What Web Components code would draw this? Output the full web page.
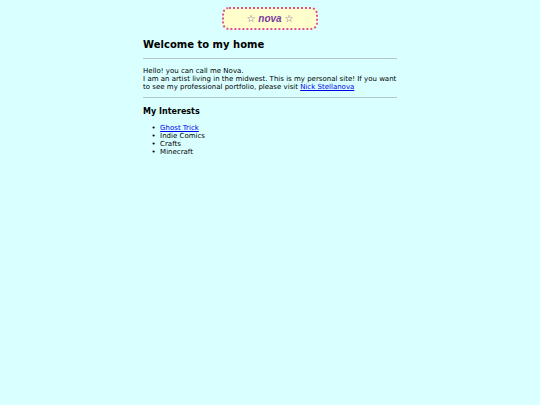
<!DOCTYPE html>
<html lang="en">
<head>
<meta charset="utf-8">
<title>nova</title>
<style>
body { margin: 0; min-height: 100vh; background: #d9ffff; color: #000; font: 7px/8px "DejaVu Sans", Verdana, sans-serif; }
</style>
</head>
<body>
<home-page>
  <site-banner slot="banner">☆ nova ☆</site-banner>
  <page-intro>
    <span slot="title">Welcome to my home</span>
    Hello! you can call me Nova.<br>
    I am an artist living in the midwest. This is my personal site! If you want to see my professional portfolio, please visit <text-link to="#portfolio">Nick Stellanova</text-link>
  </page-intro>
  <interest-list></interest-list>
</home-page>
<script>
class HomePage extends HTMLElement {
  constructor() {
    super();
    this.attachShadow({ mode: "open" }).innerHTML = `
      <style>
        :host { display: flex; flex-direction: column; align-items: center; padding-top: 7px; }
        main { width: 47%; }
      </style>
      <slot name="banner"></slot>
      <main><slot></slot></main>`;
  }
}
class SiteBanner extends HTMLElement {
  constructor() {
    super();
    this.attachShadow({ mode: "open" }).innerHTML = `
      <style>
        :host { display: block; padding: 3px 23px 2px; border: 2px dotted #d9509c;
          border-radius: 7px; background: #ffffcc; color: #7a3a9e;
          font: italic bold 10px/14px "Liberation Sans", "DejaVu Sans", sans-serif; }
      </style>
      <slot></slot>`;
  }
}
class PageIntro extends HTMLElement {
  constructor() {
    super();
    this.attachShadow({ mode: "open" }).innerHTML = `
      <style>
        :host { display: block; }
        h1 { margin: 8px 0 6px; font-size: 10px; line-height: 14px; }
        p { margin: 0; padding: 8px 0 6px; border: solid #b4c8ca; border-width: 1px 0; }
      </style>
      <h1><slot name="title"></slot></h1>
      <p><slot></slot></p>`;
  }
}
class InterestList extends HTMLElement {
  constructor() {
    super();
    this.attachShadow({ mode: "open" }).innerHTML = `
      <style>
        :host { display: block; }
        h2 { margin: 9px 0 7px; font-size: 8px; line-height: 10px; }
        ul { margin: 0; padding-left: 17px; list-style: "•\\00a0\\00a0"; }
      </style>
      <h2>My Interests</h2>
      <ul>
        <li><text-link to="#ghost-trick">Ghost Trick</text-link></li>
        <li>Indie Comics</li>
        <li>Crafts</li>
        <li>Minecraft</li>
      </ul>`;
  }
}
class TextLink extends HTMLElement {
  connectedCallback() {
    if (this.shadowRoot) return;
    this.attachShadow({ mode: "open" }).innerHTML = `
      <style>
        :host { display: inline; }
        a { color: #0000ee; }
      </style>
      <a><slot></slot></a>`;
    this.shadowRoot.querySelector("a").href = this.getAttribute("to");
  }
}
customElements.define("home-page", HomePage);
customElements.define("site-banner", SiteBanner);
customElements.define("page-intro", PageIntro);
customElements.define("interest-list", InterestList);
customElements.define("text-link", TextLink);
</script>
</body>
</html>
